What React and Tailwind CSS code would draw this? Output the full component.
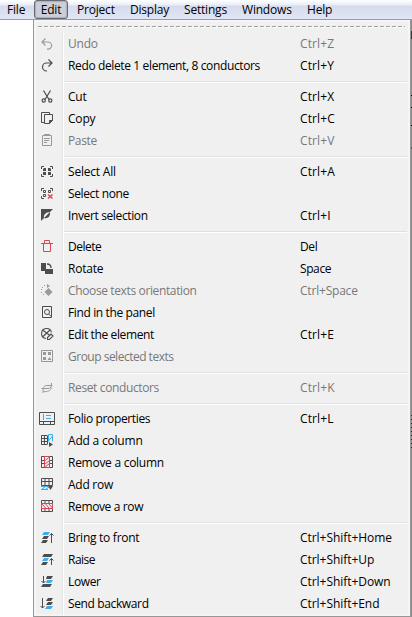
import React from "react";

const K = "#4d4d4d";
const R = "#da4453";
const B = "#3daee9";

// 16x16 icon glyphs; disabled ones are drawn in grey
const icons = {
  undo: <path d="M6.500 2.500 3 6l3.500 3.500M3 6h6a3.600 3.600 0 0 1 0 7.200H8" stroke="#999" strokeWidth="1.200" fill="none" />,
  redo: <path d="M9.500 1.500 13 5 9.500 8.500M13 5H7.500a4 4 0 0 0 0 8H8" stroke={K} strokeWidth="1.200" fill="none" />,
  cut: (
    <g stroke={K} strokeWidth="1.200" fill="none">
      <path d="M4.500 1.500 10 10.500M11.500 1.500 6 10.500" />
      <circle cx="4.700" cy="11.500" r="1.600" /><circle cx="11.300" cy="11.500" r="1.600" />
    </g>
  ),
  copy: (
    <g stroke={K} fill="none">
      <path d="M5.500 11.500h-3v-10h8v2M5.500 3.500h8v6l-3 3h-5z" />
      <path d="M13.500 9.500h-3v3z" fill={K} />
    </g>
  ),
  paste: (
    <g stroke="#999" fill="none">
      <path d="M3.500 2.500h9v10h-9zM5 5.500h6M5 7.500h5M5 9.500h3" /><path d="M5.500 1.500h5v1h-5z" />
    </g>
  ),
  all: (
    <g>
      <path d="M2.500 5V2.500H5M11 2.500h2.500V5M2.500 10v2.500H5M11 12.500h2.500V10" stroke={K} fill="none" />
      <path d="M5 4h2v3H4V5zM9 4h2l1 1v2H9zM4 8h3v3H4zM9 8h3v3H9z" fill={K} />
    </g>
  ),
  none: (
    <g fill="none">
      <path d="M2.500 5V2.500H5M11 2.500h2.500V5M2.500 10v2.500H5M4.500 4.500h2v2h-2zM9.500 4.500h2v2h-2zM4.500 8.500h2v2h-2z" stroke={K} />
      <path d="m9 8.500 4.500 4m0-4-4.500 4" stroke={R} strokeWidth="1.500" />
    </g>
  ),
  invert: (
    <g>
      <path d="M2 1h12L2 13z" fill={K} />
      <path d="M5 10c-1-3 2-6 6-6C11.500 8 8.500 11 5 10z" fill="#efefef" />
      <path d="M5 10c4 1 6.500-2 6-6z" fill={K} />
    </g>
  ),
  del: <path d="M2 4.500h12M5.500 4.500v-3h5v3M4.500 4.500v8h7v-8" stroke={R} fill="none" />,
  rotate: (
    <g fill={K}>
      <path d="M2 2h5v8H2zM6 8h8v5H6z" />
      <path d="M8 3c3 0 4 1.500 4 4" stroke={K} strokeWidth="1.400" fill="none" />
      <path d="M7 10V8h3v-1H7z" fill="#efefef" />
    </g>
  ),
  orient: (
    <g fill="#999">
      <path d="m9.500 5 4 4-4 4-4-4z" />
      <path d="M2 6h1v1H2zM3 4h1v1H3zM5 2h1v1H5zM2 9h1v1H2zM4 11h1v1H4zM8 1l3 2-3 2z" />
    </g>
  ),
  find: (
    <g stroke={K} fill="none">
      <path d="M3.500 12.500v-11h9v11zM9.800 9l2.200 2.500" /><circle cx="8" cy="7" r="2.500" />
    </g>
  ),
  edit: (
    <g stroke={K} strokeWidth="1.100" fill="none">
      <path d="M7 11.500A5 5 0 1 1 12.500 5.500M3.500 3 11 8.500M4 9.500 11 3" />
      <path d="m8.500 10.500 3.500-3.500 2 2-3.500 3.500H8.500z" />
    </g>
  ),
  group: (
    <g>
      <path d="M2.500 1.500h11v11h-11z" stroke="#999" fill="none" />
      <path d="M4 3h3v3H4zM9 3h3v3H9zM4 8h3v3H4zM10.500 8l2 3h-4z" fill="#999" />
    </g>
  ),
  reset: (
    <path d="M2.500 8.500H9c3 0 3.500-2 3.500-5.500M4 13c0-5 .5-7.500 4-7.500h5.500M4.500 11.500c4 .5 7-.5 8-4" stroke="#999" fill="none" />
  ),
  folio: (
    <g fill="none">
      <path d="M.5 1.500h15v12H.5zM.5 10.500h15M4.500 10.500v3M11.500 10.500v3" stroke={K} />
      <path d="M4.500 3v6M7 4.500h5M7 7.500h5" stroke={B} />
    </g>
  ),
  addCol: (
    <g fill="none">
      <path d="M8 2.500H2.500v9H8M2.500 5.500H8M2.500 8.500H8M5.500 2.500v9M8.500 2.500v9" stroke={K} />
      <path d="M9.500 8.500v-7h4v7M9.500 8l4-5" stroke={B} /><path d="m10 9 4 2.500-4 2.500z" fill={K} />
    </g>
  ),
  remCol: (
    <g fill="none">
      <path d="M2.500 1.500h11v11h-11zM2.500 5.500h11M2.500 8.500h11" stroke={K} />
      <path d="M5.500 1.500h5v11h-5z" fill="#efefef" stroke={R} /><path d="m5.500 6 5-4M5.500 9.500l5-4M5.500 12.500l5-4" stroke={R} />
    </g>
  ),
  addRow: (
    <g fill="none">
      <path d="M2.500 8.500v-7h11v7zM2.500 4.500h11M6 1.500v7M10 1.500v7" stroke={K} />
      <path d="M2 9.500h7M2 12.500h7M3 12l3-2M7 12l3-2" stroke={B} /><path d="M9 9h5l-2.500 4z" fill={K} />
    </g>
  ),
  remRow: (
    <g fill="none">
      <path d="M2.500 1.500h11v11h-11zM6 1.500v11M10 1.500v11" stroke={K} />
      <path d="M2.500 4.500h11v5h-11z" fill="#efefef" stroke={R} /><path d="m3 5 4 4.500M6.500 5l4 4.500M10 5l3.500 4" stroke={R} />
    </g>
  ),
  front: <g><path d="M5 2h6L9 5H3z" fill={B} /><path d="M5 6h5L8 9H3zM4 10h5l-2 3H2z" fill={K} /><path d="M12.500 13V3.500M10.500 5.500l2-2 2 2" stroke={K} fill="none" /></g>,
  raise: <g><path d="M5 2h9l-2 3H3z" fill={K} /><path d="M5 6h5L8 9H3z" fill={B} /><path d="M4 10h5l-2 3H2z" fill={K} /><path d="M12.500 13V6.500M10.500 8.500l2-2 2 2" stroke={K} fill="none" /></g>,
  lower: <g><path d="M8 2h6l-2 3H7zM4 10h9l-2 3H2z" fill={K} /><path d="M8 6h6l-2 3H7z" fill={B} /><path d="M4.500 2v7M2.500 7l2 2 2-2" stroke={K} fill="none" /></g>,
  back: <g><path d="M9 2h5l-2 3H7zM9 6h5l-2 3H7z" fill={K} /><path d="M8 10h6l-2 3H6z" fill={B} /><path d="M3.500 2v10M1.500 10l2 2 2-2" stroke={K} fill="none" /></g>,
};

const T1 = "tracking-[-0.27px]";
const T2 = "tracking-[-0.37px]";
const T3 = "tracking-[-0.5px]";

// icon, label, shortcut, disabled, label tracking
const groups = [
  [["undo", "Undo", "Ctrl+Z", 1], ["redo", "Redo delete 1 element, 8 conductors", "Ctrl+Y", 0, T2]],
  [["cut", "Cut", "Ctrl+X"], ["copy", "Copy", "Ctrl+C"], ["paste", "Paste", "Ctrl+V", 1, T2]],
  [["all", "Select All", "Ctrl+A"], ["none", "Select none", "", 0, T2], ["invert", "Invert selection", "Ctrl+I", 0, T2]],
  [
    ["del", "Delete", "Del", 0, T3], ["rotate", "Rotate", "Space"], ["orient", "Choose texts orientation", "Ctrl+Space", 1, T2],
    ["find", "Find in the panel", "", 0, T2], ["edit", "Edit the element", "Ctrl+E", 0, T2], ["group", "Group selected texts", "", 1, T3],
  ],
  [["reset", "Reset conductors", "Ctrl+K", 1, T2]],
  [["folio", "Folio properties", "Ctrl+L", 0, T2], ["addCol", "Add a column", ""], ["remCol", "Remove a column", "", 0, T1], ["addRow", "Add row", "", 0, T1], ["remRow", "Remove a row", "", 0, T2]],
  [["front", "Bring to front", "Ctrl+Shift+Home", 0, T1], ["raise", "Raise", "Ctrl+Shift+Up", 0, T3], ["lower", "Lower", "Ctrl+Shift+Down", 0, T2], ["back", "Send backward", "Ctrl+Shift+End", 0, T2]],
];

function keyTracking(keys) {
  if (!keys.includes("+")) return "tracking-[-0.4px]";
  if (keys.includes("Shift")) return "tracking-[-0.05px]";
  return keys.length > 6 ? "tracking-[-0.2px]" : "tracking-[0.1px]";
}

function Row({ item: [icon, label, keys, disabled, tracking = ""] }) {
  return (
    <div className={"flex h-[22px] items-center " + (disabled ? "text-[#787878]" : "text-black")}>
      <div className="flex w-[28px] shrink-0 justify-center pr-[2px]">
        <svg width="16" height="16" viewBox="0 0 16 16">{icons[icon]}</svg>
      </div>
      <div className="h-full w-[2px] shrink-0 border-l border-[#e2e3e3] bg-white" />
      <span className={"w-[236px] shrink-0 pl-1 " + tracking}>{label}</span>
      <span className={keyTracking(keys)}>{keys}</span>
    </div>
  );
}

export default function App() {
  return (
    <div className="h-[617px] w-[412px] overflow-hidden bg-white font-['Open_Sans',sans-serif] text-[12px] leading-[22px] tracking-[-0.2px] whitespace-nowrap">
      <div className="flex h-[20px] items-center border-b border-[#9c9ca2] bg-[linear-gradient(180deg,#ffffff_0px,#e8edf6_5px,#d5dbed_6px,#e1e6f6_19px)]">
        <span className="w-[34px] pl-[7px]">File</span>
        <span className="h-[19px] w-[34px] rounded-[3px] border border-[#686a73] bg-[#cbcfda] text-center leading-[18px] inset-shadow-[0_0_1px_1px_#a9adb9]">Edit</span>
        <span className="w-[53px] pl-[9px]">Project</span>
        <span className="w-[54px] pl-[9px]">Display</span>
        <span className="w-[59px] pl-[9px]">Settings</span>
        <span className="w-[64px] pl-[8px]">Windows</span>
        <span className="pl-[9px]">Help</span>
      </div>
      <div className="flex h-[597px]">
        <div className="h-full w-[33px] shrink-0" />
        <div className="h-[597px] w-[378px] shrink-0 border border-t-0 border-[#979797] bg-[#f0f0f0] shadow-[inset_0_0_0_2px_#f5f5f5]">
          <div className="h-[13px] pt-[6px]">
            <div className="ml-1 h-px w-[367px] bg-[repeating-linear-gradient(90deg,#a0a0a0_0_4px,transparent_4px_6px)]" />
            <div className="ml-[5px] h-px w-[367px] bg-[repeating-linear-gradient(90deg,#ffffff_0_4px,transparent_4px_6px)]" />
          </div>
          {groups.map((g, i) => (
            <React.Fragment key={i}>
              {i > 0 && (
                <div className="flex h-[9px] pl-[28px]">
                  <div className="w-[2px] border-l border-[#e2e3e3] bg-white" />
                  <div className="mt-[4px] h-[2px] w-[343px] border-t border-[#e0e0e0] bg-white" />
                </div>
              )}
              {g.map((it) => <Row key={it[1]} item={it} />)}
            </React.Fragment>
          ))}
        </div>
        <div className="flex h-full w-px flex-col bg-[#8c8c8c]">
          <div className="mt-[11px] h-[8px] bg-[#333]" />
          <div className="mt-[56px] h-px bg-black" />
          <div className="mt-[11px] h-px bg-black" />
          <div className="mt-[17px] h-px bg-black" />
          <div className="mt-[21px] h-[2px] bg-[#555]" />
          <div className="mt-[266px] h-[36px] bg-[repeating-linear-gradient(180deg,#222_0_1px,#8c8c8c_1px_4px)]" />
        </div>
      </div>
    </div>
  );
}
